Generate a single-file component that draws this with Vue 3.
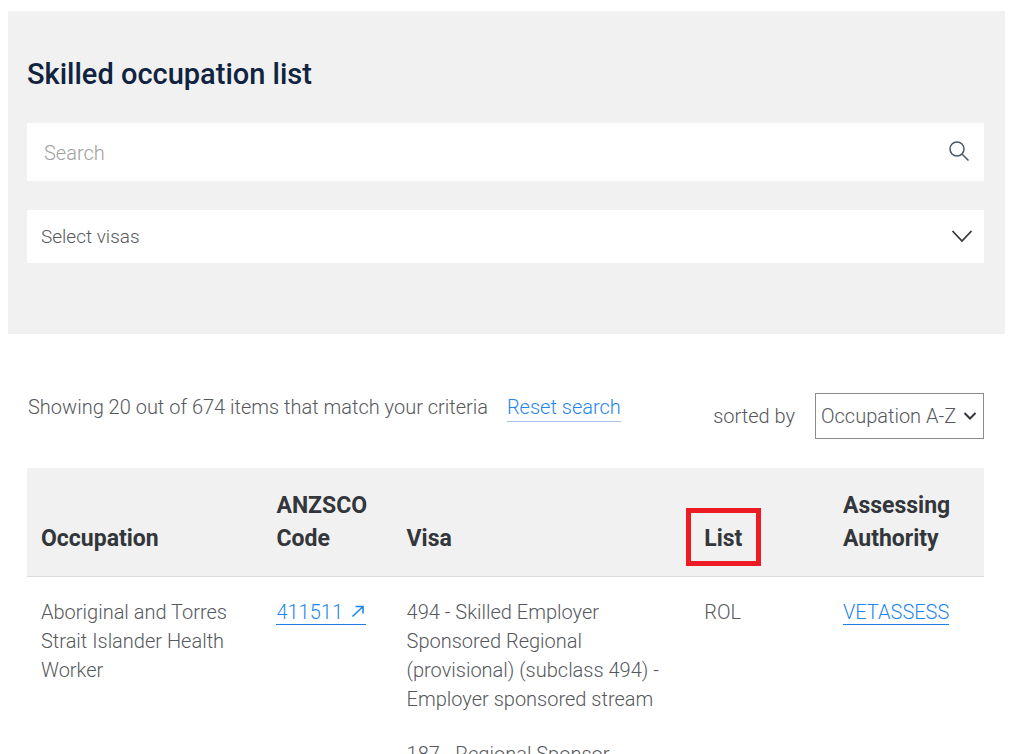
<script setup>
import { ref } from 'vue'

const query = ref('')
const visa = ref('')
const sort = ref('occupation')

const occupations = [
  {
    name: 'Aboriginal and Torres Strait Islander Health Worker',
    code: '411511',
    visas: [
      '494 - Skilled Employer Sponsored Regional (provisional) (subclass 494) - Employer sponsored stream',
      '187 - Regional Sponsor',
    ],
    list: 'ROL',
    authority: 'VETASSESS',
  },
]
</script>

<template>
  <main class="page">
    <section class="panel">
      <h1>Skilled occupation list</h1>
      <form class="search" role="search" @submit.prevent>
        <input v-model="query" type="text" placeholder="Search" aria-label="Search" />
        <button type="submit" aria-label="Submit search">
          <svg width="22" height="22" viewBox="0 0 22 22" fill="none" stroke="#4a5666" stroke-width="1.500">
            <circle cx="9" cy="9" r="7" />
            <path d="M14 14l6.500 6.500" />
          </svg>
        </button>
      </form>
      <div class="visa">
        <select v-model="visa" aria-label="Select visas">
          <option value="">Select visas</option>
        </select>
        <svg class="chevron" width="22" height="14" viewBox="0 0 22 14" fill="none" stroke="#33363b" stroke-width="1.800">
          <path d="M1.500 1L11 11L20.500 1" />
        </svg>
      </div>
    </section>

    <section class="results">
      <div class="toolbar">
        <p class="count">
          Showing 20 out of 674 items that match your criteria
          <a class="reset" href="#reset">Reset search</a>
        </p>
        <div class="sort">
          <label for="sort">sorted by</label>
          <div class="sort-box">
            <select id="sort" v-model="sort">
              <option value="occupation">Occupation A-Z</option>
            </select>
            <svg class="caret" width="14" height="10" viewBox="0 0 14 10" fill="none" stroke="#33363b" stroke-width="2">
              <path d="M1.500 2L7 7.500L12.500 2" />
            </svg>
          </div>
        </div>
      </div>

      <table>
        <colgroup>
          <col class="c-name" />
          <col class="c-code" />
          <col class="c-visa" />
          <col class="c-list" />
          <col class="c-auth" />
        </colgroup>
        <thead>
          <tr>
            <th scope="col">Occupation</th>
            <th scope="col">ANZSCO Code</th>
            <th scope="col">Visa</th>
            <th scope="col"><span class="marked">List</span></th>
            <th scope="col">Assessing Authority</th>
          </tr>
        </thead>
        <tbody>
          <tr v-for="row in occupations" :key="row.code">
            <td>{{ row.name }}</td>
            <td>
              <a href="#code" class="link code">{{ row.code }}
                <svg width="15" height="13" viewBox="0 0 15 13" fill="none" stroke="#1f86ee" stroke-width="1.600">
                  <path d="M1.500 11.500L12 1.500M4.500 1.500H12V8.500" />
                </svg>
              </a>
            </td>
            <td>
              <p v-for="item in row.visas" :key="item">{{ item }}</p>
            </td>
            <td>{{ row.list }}</td>
            <td><a href="#authority" class="link">{{ row.authority }}</a></td>
          </tr>
        </tbody>
      </table>
    </section>
  </main>
</template>

<style>
body {
  background: #fff;
}
</style>

<style scoped>
.page {
  padding: 11px 19px 0 8px;
  font-family: Roboto, "Liberation Sans", sans-serif;
  font-size: 20px;
  font-weight: 300;
  line-height: 29px;
  color: #55585c;
}

input,
select,
button {
  font: inherit;
  color: inherit;
  border: 0;
  border-radius: 0;
  background: none;
  margin: 0;
  appearance: none;
}

.panel {
  background: #f1f1f1;
  padding: 47px 21px 71px 20px;
  padding-left: 19px;
}

h1 {
  margin: 0 0 32px;
  font-size: 29px;
  font-weight: 500;
  line-height: 33px;
  color: #10233f;
}

.search {
  display: flex;
  align-items: center;
  height: 58px;
  margin-bottom: 29px;
  background: #fff;
}

.search input {
  flex: 1;
  min-width: 0;
  height: 58px;
  padding: 2px 16px 0 17px;
}

.search input::placeholder {
  color: #a0a0a0;
  opacity: 1;
}

.search button {
  display: flex;
  padding: 0 14px 2px 0;
}

.visa {
  position: relative;
}

.visa select {
  display: block;
  width: 100%;
  height: 53px;
  padding: 0 14px;
  background: #fff;
  font-size: 19px;
}

.chevron {
  position: absolute;
  right: 11px;
  top: 20px;
  pointer-events: none;
}

.results {
  padding: 59px 21px 0 19px;
}

.toolbar {
  display: flex;
  justify-content: space-between;
  align-items: flex-start;
  margin-bottom: 29px;
}

.count {
  margin: 0;
  padding-left: 1px;
}

.reset {
  display: inline-block;
  margin-left: 14px;
  line-height: 28px;
  color: #1f86ee;
  text-decoration: none;
  border-bottom: 1px solid #a8c4e4;
}

.sort {
  display: flex;
  align-items: center;
  gap: 20px;
}

.sort-box {
  position: relative;
}

.sort-box select {
  display: block;
  width: 169px;
  height: 46px;
  padding: 0 5px;
  border: 1px solid #8b8b8b;
}

.caret {
  position: absolute;
  right: 7px;
  top: 18px;
  pointer-events: none;
}

table {
  width: 100%;
  border-collapse: collapse;
  table-layout: fixed;
}

.c-name { width: 24.6%; }
.c-code { width: 13.6%; }
.c-visa { width: 31.1%; }
.c-list { width: 14.5%; }
.c-auth { width: 16.2%; }

th {
  padding: 21px 14px;
  background: #f1f1f1;
  border-bottom: 1px solid #dcdcdc;
  text-align: left;
  vertical-align: bottom;
  font-size: 23px;
  font-weight: 700;
  line-height: 33px;
  color: #33363b;
}

th:nth-child(2) {
  padding-right: 8px;
}

.marked {
  position: relative;
}

.marked::after {
  content: "";
  position: absolute;
  inset: -17px -19px -14px -18px;
  border: 5px solid #ed1c24;
}

td {
  padding: 21px 14px;
  vertical-align: top;
}

td p {
  margin: 0 0 26px;
}

.link {
  color: #1f86ee;
  text-decoration: none;
  border-bottom: 1px solid #1f7de6;
}

.code {
  white-space: nowrap;
}

.code svg {
  margin-left: 3px;
  vertical-align: 1px;
}
</style>
